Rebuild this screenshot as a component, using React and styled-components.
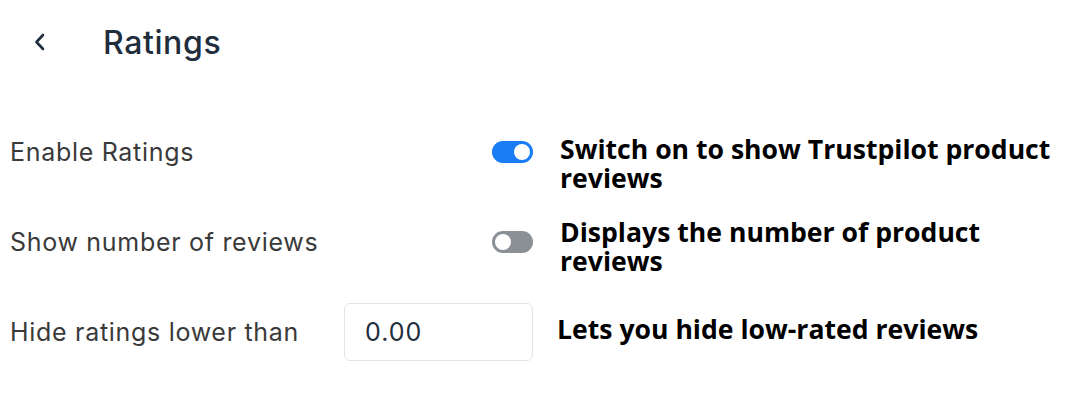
import React from "react";
import styled, { createGlobalStyle } from "styled-components";

const Global = createGlobalStyle`
  html, body { margin: 0; padding: 0; background: #ffffff; }
  body { font-family: Inter, "Noto Sans", sans-serif; }
`;

const Page = styled.div`
  width: 1069px;
  height: 408px;
  box-sizing: border-box;
  display: flex;
  flex-direction: column;
  background: #fff;
`;

const Header = styled.header`
  height: 84px;
  display: flex;
  align-items: center;
  padding-left: 33px;
  gap: 57px;
`;

const BackButton = styled.button`
  border: 0;
  background: none;
  padding: 0;
  width: 13px;
  height: 20px;
  display: flex;
  align-items: center;
  justify-content: center;
  color: #1f2d3d;
  cursor: pointer;
`;

const Title = styled.h1`
  margin: 0;
  font-family: Inter, sans-serif;
  font-size: 32px;
  font-weight: 500;
  color: #1f2d3d;
  letter-spacing: 0.6px;
`;

const Rows = styled.div`
  margin-top: 38px;
  display: flex;
  flex-direction: column;
  gap: 30px;
`;

const Row = styled.div`
  height: 60px;
  display: grid;
  grid-template-columns: 533px 1fr;
  column-gap: ${(p) => p.$gap}px;
  align-items: start;
`;

const Setting = styled.div`
  height: 60px;
  box-sizing: border-box;
  padding-left: 10px;
  display: flex;
  align-items: center;
  justify-content: space-between;
`;

const Label = styled.span`
  font-family: Inter, sans-serif;
  font-size: 25px;
  color: #3a3a3a;
  letter-spacing: 0.7px;
`;

const Toggle = styled.span`
  width: 41px;
  height: 22px;
  border-radius: 11px;
  background: ${(p) => (p.$on ? "#1a7cf5" : "#8b9097")};
  display: flex;
  align-items: center;
  justify-content: ${(p) => (p.$on ? "flex-end" : "flex-start")};
  padding: 0 3px;
  box-sizing: border-box;
  &::after {
    content: "";
    width: 16px;
    height: 16px;
    border-radius: 50%;
    background: #fff;
  }
`;

const Input = styled.input`
  width: 189px;
  height: 58px;
  box-sizing: border-box;
  border: 1.5px solid #e1e5ea;
  border-radius: 6px;
  padding: 0 0 0 20px;
  font-family: Inter, sans-serif;
  font-size: 25px;
  letter-spacing: 1px;
  color: #1f2d3d;
  outline: none;
  background: #fff;
`;

const Note = styled.p`
  margin: ${(p) => p.$top}px 0 0;
  font-family: "Open Sans", sans-serif;
  font-weight: 700;
  font-size: 26.6px;
  line-height: 29px;
  color: #000;
  max-width: 500px;
`;

const Chevron = () => (
  <svg width="13" height="20" viewBox="0 0 13 20" fill="none">
    <path d="M10 3 L3.5 10 L10 17" stroke="currentColor" strokeWidth="2.6" strokeLinecap="round" strokeLinejoin="round" />
  </svg>
);

export default function App() {
  return (
    <Page>
      <Global />
      <Header>
        <BackButton aria-label="Back"><Chevron /></BackButton>
        <Title>Ratings</Title>
      </Header>
      <Rows>
        <Row $gap={27}>
          <Setting>
            <Label>Enable Ratings</Label>
            <Toggle $on />
          </Setting>
          <Note $top={13}>Switch on to show Trustpilot product reviews</Note>
        </Row>
        <Row $gap={27}>
          <Setting>
            <Label>Show number of reviews</Label>
            <Toggle />
          </Setting>
          <Note $top={6}>Displays the number of product reviews</Note>
        </Row>
        <Row $gap={24}>
          <Setting>
            <Label>Hide ratings lower than</Label>
            <Input defaultValue="0.00" />
          </Setting>
          <Note $top={13}>Lets you hide low-rated reviews</Note>
        </Row>
      </Rows>
    </Page>
  );
}
